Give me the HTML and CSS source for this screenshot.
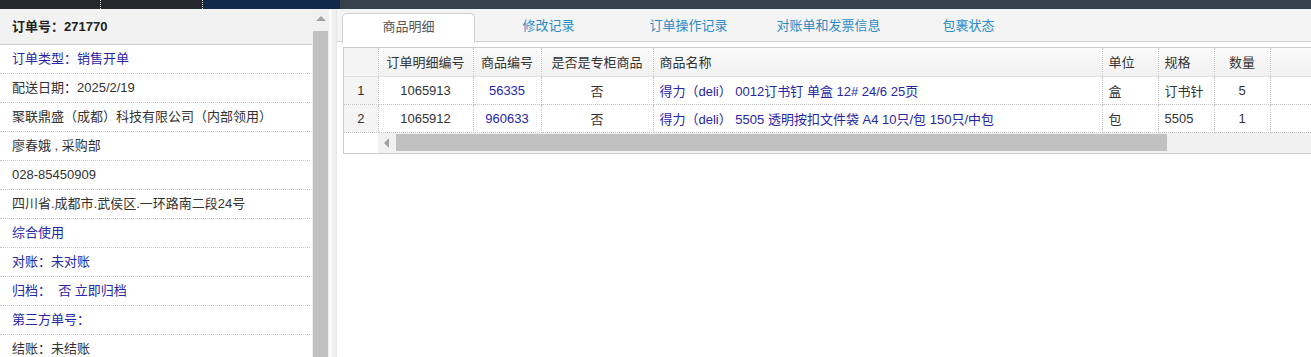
FILE: index.html
```html
<!DOCTYPE html>
<html lang="zh-CN">
<head>
    <meta charset="UTF-8">
    <title>订单详情</title>
    <link rel="stylesheet" href="styles.css">
</head>
<body>
    <div class="topbar">
        <div class="seg seg-dark"></div>
        <div class="seg seg-dark"></div>
        <div class="seg seg-navy"></div>
        <div class="seg seg-rest"></div>
    </div>

    <div class="main">
        <!-- order info -->
        <div class="side">
            <div class="info">
                <div class="info-head">订单号：271770</div>
                <div class="info-row link">订单类型：销售开单</div>
                <div class="info-row">配送日期：2025/2/19</div>
                <div class="info-row">聚联鼎盛（成都）科技有限公司（内部领用）</div>
                <div class="info-row">廖春娥 , 采购部</div>
                <div class="info-row">028-85450909</div>
                <div class="info-row">四川省.成都市.武侯区.一环路南二段24号</div>
                <div class="info-row link">综合使用</div>
                <div class="info-row link">对账：未对账</div>
                <div class="info-row link">归档：&nbsp;&nbsp;否 立即归档</div>
                <div class="info-row link">第三方单号：</div>
                <div class="info-row">结账：未结账</div>
            </div>
            <div class="vscroll">
                <div class="arrow-up"></div>
                <div class="vthumb"></div>
            </div>
        </div>
        <div class="gutter"></div>

        <!-- tabs + detail grid -->
        <div class="content">
            <div class="tabs">
                <div class="tab active">商品明细</div>
                <div class="tab">修改记录</div>
                <div class="tab">订单操作记录</div>
                <div class="tab">对账单和发票信息</div>
                <div class="tab">包裹状态</div>
            </div>

            <div class="grid">
                <table>
                    <colgroup>
                        <col style="width:34px">
                        <col style="width:95px">
                        <col style="width:68px">
                        <col style="width:112px">
                        <col style="width:449px">
                        <col style="width:56px">
                        <col style="width:56px">
                        <col style="width:56px">
                        <col>
                    </colgroup>
                    <thead>
                        <tr>
                            <th class="rn"></th>
                            <th class="c">订单明细编号</th>
                            <th class="c">商品编号</th>
                            <th class="c">是否是专柜商品</th>
                            <th>商品名称</th>
                            <th>单位</th>
                            <th>规格</th>
                            <th class="c">数量</th>
                            <th></th>
                        </tr>
                    </thead>
                    <tbody>
                        <tr>
                            <td class="rn">1</td>
                            <td class="c">1065913</td>
                            <td class="c link">56335</td>
                            <td class="c">否</td>
                            <td class="link">得力（deli） 0012订书钉 单盒 12# 24/6 25页</td>
                            <td>盒</td>
                            <td>订书针</td>
                            <td class="c">5</td>
                            <td></td>
                        </tr>
                        <tr>
                            <td class="rn">2</td>
                            <td class="c">1065912</td>
                            <td class="c link">960633</td>
                            <td class="c">否</td>
                            <td class="link">得力（deli） 5505 透明按扣文件袋 A4 10只/包 150只/中包</td>
                            <td>包</td>
                            <td>5505</td>
                            <td class="c">1</td>
                            <td></td>
                        </tr>
                    </tbody>
                </table>
                <div class="hscroll">
                    <div class="hscroll-corner"></div>
                    <div class="hscroll-track">
                        <div class="arrow-left"></div>
                        <div class="hthumb"></div>
                    </div>
                </div>
            </div>
        </div>
    </div>
</body>
</html>
```

FILE: styles.css
```css
/* Basic Styles */
* {
    box-sizing: border-box;
}

body {
    margin: 0;
    font-family: "Liberation Sans", "Noto Sans CJK SC", sans-serif;
    font-size: 13px;
    color: #333;
    background: #fff;
    overflow: hidden;
}

.link {
    color: #2626a6;
}

/* Top strip */
.topbar {
    display: flex;
    height: 9px;
}

.seg-dark {
    width: 101px;
    background: #23272e;
    border-right: 1px dotted #ddd;
}

.seg-dark + .seg-dark {
    width: 102px;
}

.seg-navy {
    width: 137px;
    background: #13294b;
}

.seg-rest {
    flex: 1;
    background: #37414b;
}

/* Layout */
.main {
    display: flex;
    height: 348px;
}

/* Left info panel */
.side {
    display: flex;
    width: 329px;
}

.info {
    width: 312px;
}

.info-head {
    height: 36px;
    padding: 1px 0 0 12px;
    line-height: 34px;
    font-weight: bold;
    color: #222;
    background: #f2f2f2;
    border-bottom: 1px solid #ccc;
}

.info-row {
    height: 29px;
    padding-left: 12px;
    line-height: 28px;
    border-bottom: 1px dotted #c8c8c8;
    margin-right: 2px;
    white-space: nowrap;
}

.vscroll {
    width: 17px;
    background: #f1f1f1;
    padding-top: 7px;
}

.arrow-up {
    width: 0;
    height: 0;
    margin: 0 auto;
    border-left: 5px solid transparent;
    border-right: 5px solid transparent;
    border-bottom: 5px solid #a3a3a3;
}

.vthumb {
    height: 330px;
    margin: 10px 1px 0;
    background: #c1c1c1;
}

.gutter {
    width: 8px;
    background: #f0f0f0;
    border-left: 3px solid #fbfbfb;
    border-right: 1px solid #e6e6e6;
}

/* Right content */
.content {
    flex: 1;
    min-width: 0;
    background: #fff;
}

.tabs {
    display: flex;
    gap: 7px;
    height: 33px;
    padding: 4px 0 0 5px;
    background: #f4f4f4;
    border-bottom: 1px solid #d0d0d0;
}

.tab {
    width: 133px;
    height: 29px;
    line-height: 26px;
    text-align: center;
    color: #2d8bc6;
}

.tab.active {
    color: #555;
    background: #fff;
    border: 1px solid #d0d0d0;
    border-bottom: none;
    border-radius: 5px 5px 0 0;
    height: 30px;
}

/* Detail grid */
.grid {
    margin: 5px 0 0 6px;
    border: 1px solid #ccc;
    border-right: none;
}

table {
    width: 100%;
    border-collapse: collapse;
    table-layout: fixed;
}

th, td {
    padding: 0 6px;
    text-align: left;
    white-space: nowrap;
    overflow: hidden;
    border-right: 1px dotted #c4c4c4;
    border-bottom: 1px dotted #c4c4c4;
}

th {
    height: 28px;
    font-weight: normal;
    color: #333;
    background: linear-gradient(#fbfbfb, #f1f1f1);
    border-bottom: 1px solid #e2e2e2;
}

td {
    height: 28px;
}

th:last-child, td:last-child {
    border-right: none;
}

.c {
    text-align: center;
}

.rn {
    text-align: center;
    background: #f4f4f4;
}

.hscroll {
    display: flex;
    height: 20px;
}

.hscroll-corner {
    width: 34px;
    background: #fff;
}

.hscroll-track {
    flex: 1;
    display: flex;
    align-items: center;
    padding: 1px 0;
    background: #f1f1f1;
}

.arrow-left {
    width: 0;
    height: 0;
    margin: 0 7px 0 6px;
    border-top: 5px solid transparent;
    border-bottom: 5px solid transparent;
    border-right: 5px solid #a3a3a3;
}

.hthumb {
    width: 771px;
    height: 17px;
    background: #c1c1c1;
}
```
